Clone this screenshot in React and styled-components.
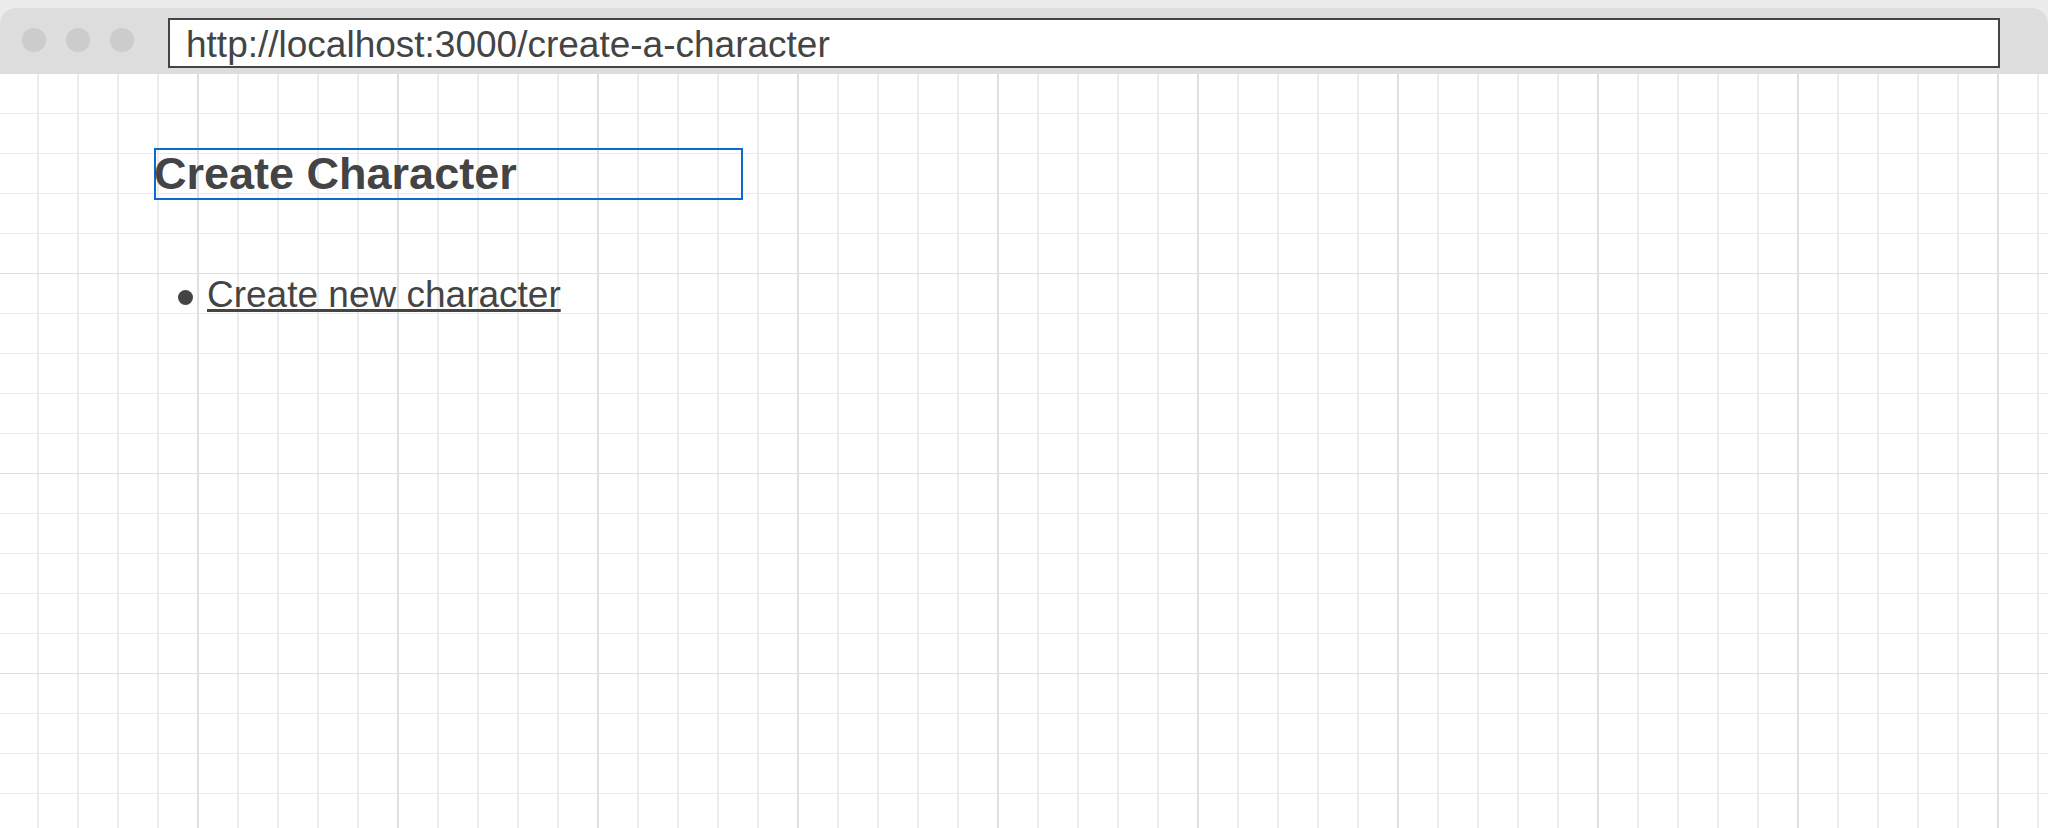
import styled, { createGlobalStyle } from "styled-components";

const GlobalStyle = createGlobalStyle`
    html, body {
        margin: 0;
        padding: 0;
        background: #ffffff;
        font-family: "Liberation Sans", Arial, sans-serif;
    }
`

const links = [
    { label: 'Create new character', href: '#' },
];

export default function App() {
    return (
        <>
        <GlobalStyle />
        <Window>
            <Toolbar>
                <Dots>
                    <Dot />
                    <Dot />
                    <Dot />
                </Dots>
                <UrlBar>http://localhost:3000/create-a-character</UrlBar>
            </Toolbar>
            <Canvas>
                <Heading>Create Character</Heading>
                <LinkList>
                    {links.map((item) => (
                        <Item key={item.label}>
                            <ItemLink href={item.href}>{item.label}</ItemLink>
                        </Item>
                    ))}
                </LinkList>
            </Canvas>
        </Window>
        </>
    )
}

const Window = styled.div`
    width: 100%;
    min-height: 100vh;
    padding-top: 8px;
    box-sizing: border-box;
    background: #ececec;
    display: flex;
    flex-direction: column;
`

const Toolbar = styled.div`
    height: 66px;
    flex-shrink: 0;
    display: flex;
    align-items: flex-start;
    background: #dddddd;
    border-radius: 16px 16px 0 0;
    padding: 0 48px 0 22px;
`

const Dots = styled.div`
    display: flex;
    gap: 20px;
    margin-top: 20px;
`

const Dot = styled.span`
    width: 24px;
    height: 24px;
    border-radius: 50%;
    background: #cccccc;
`

const UrlBar = styled.div`
    flex: 1;
    height: 50px;
    box-sizing: border-box;
    margin: 10px 0 0 34px;
    padding: 7px 16px 0;
    border: 2px solid #444444;
    background: #ffffff;
    color: #444444;
    font-size: 37px;
    line-height: 36px;
    white-space: nowrap;
`

const Canvas = styled.div`
    flex: 1;
    padding: 74px 0 0 154px;
    background-color: #ffffff;
    background-image:
        linear-gradient(to right, transparent 197px, #e0e0e0 197px, #e0e0e0 199px, transparent 199px),
        linear-gradient(to bottom, transparent 199px, #e0e0e0 199px, #e0e0e0 201px, transparent 201px),
        linear-gradient(to right, transparent 37px, #ececec 37px, #ececec 39px, transparent 39px),
        linear-gradient(to bottom, transparent 39px, #ececec 39px, #ececec 41px, transparent 41px);
    background-size: 200px 200px, 200px 200px, 40px 40px, 40px 40px;
    background-position: 0 0, 0 0, 0 0, 0 0;
`

const Heading = styled.h1`
    width: 589px;
    box-sizing: border-box;
    margin: 0;
    border: 2px solid #0a6acd;
    color: #444444;
    font-size: 45px;
    font-weight: 700;
    line-height: 48px;
    text-indent: -2px;
`

const LinkList = styled.ul`
    list-style: none;
    margin: 74px 0 0 24px;
    padding: 0;
`

const Item = styled.li`
    font-size: 37px;
    line-height: 41px;
    color: #444444;

    &::before {
        content: "";
        display: inline-block;
        vertical-align: middle;
        width: 15px;
        height: 15px;
        margin-right: 14px;
        border-radius: 50%;
        background: #444444;
    }
`

const ItemLink = styled.a`
    color: #444444;
    text-decoration: underline;
`
